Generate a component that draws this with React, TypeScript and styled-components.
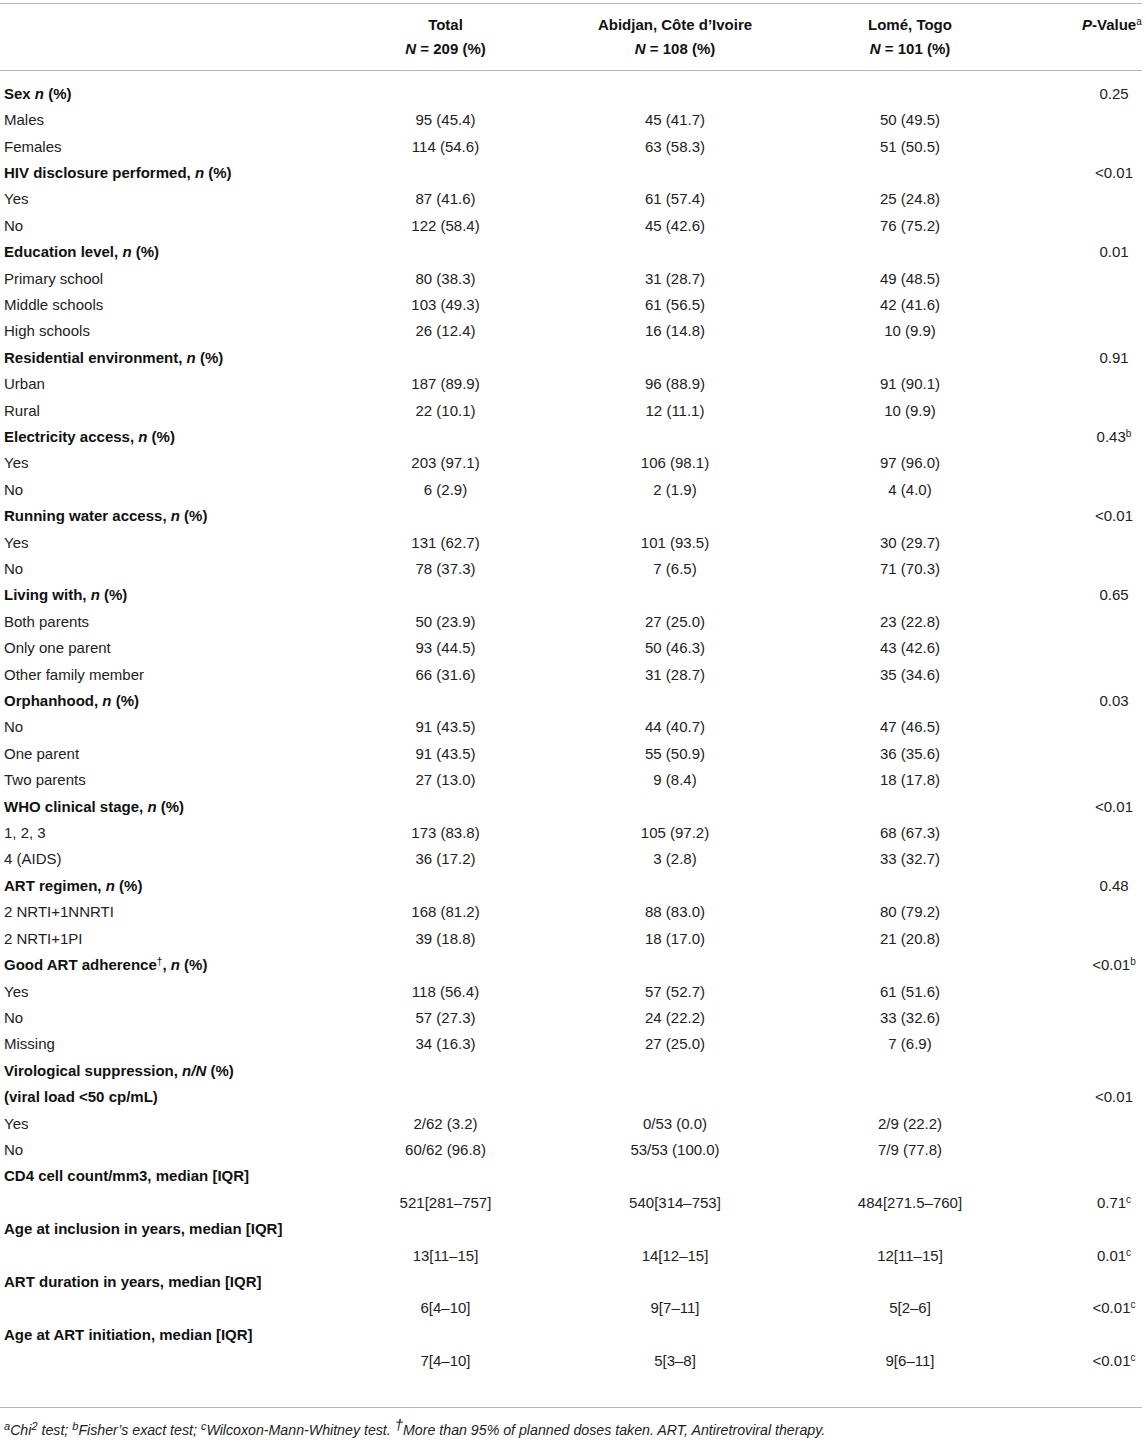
import React from "react";
import styled, { createGlobalStyle } from "styled-components";

const GlobalStyle = createGlobalStyle`
  html, body {
    margin: 0;
    padding: 0;
    background: #ffffff;
  }
  body {
    font-family: "Liberation Sans", Arial, Helvetica, sans-serif;
    color: #222222;
  }
`;

const COLS = "331px 229px 230px 240px 112px";

const Page = styled.div`
  width: 1146px;
  padding-top: 3px;
`;

const Table = styled.div`
  width: 1142px;
  border-top: 1.5px solid #b4b4b4;
  border-bottom: 1.5px solid #b4b4b4;
`;

const HeadBlock = styled.div`
  border-bottom: 1.5px solid #b4b4b4;
  padding: 8px 0 10px;
`;

const HeadRow = styled.div`
  display: grid;
  grid-template-columns: ${COLS};
  height: 24px;
  align-items: center;
  font-size: 15px;
  font-weight: 700;
  color: #111;
`;

const Body = styled.div`
  padding: 9px 0 33px;
`;

const Row = styled.div`
  display: grid;
  grid-template-columns: ${COLS};
  height: 26.42px;
  align-items: center;
  font-size: 15px;
  line-height: 1;
`;

const Label = styled.div<{ $bold?: boolean }>`
  padding-left: 4px;
  white-space: nowrap;
  font-weight: ${(p) => (p.$bold ? 700 : 400)};
  color: ${(p) => (p.$bold ? "#111" : "#222")};
`;

const Cell = styled.div`
  text-align: center;
  white-space: nowrap;
`;

const PCell = styled.div<{ $shift?: number }>`
  padding-left: ${(p) => 56 - (p.$shift ?? 0)}px;
  padding-right: ${(p) => p.$shift ?? 0}px;
  text-align: center;
  white-space: nowrap;
`;

const Sup = styled.sup<{ $size?: number }>`
  font-size: ${(p) => p.$size ?? 10}px;
  line-height: 0;
  vertical-align: 5px;
  font-weight: 400;
`;

const Footer = styled.div`
  padding: 14px 0 0 4px;
  font-size: 14.2px;
  font-style: italic;
  color: #222;
`;

type R = {
  kind: "head" | "item" | "vals";
  label?: React.ReactNode;
  v?: [string, string, string];
  p?: React.ReactNode;
};

const I = ({ children }: { children: React.ReactNode }) => <i>{children}</i>;
const np = (t: string) => (
  <>
    {t}, <I>n</I> (%)
  </>
);
const pv = (v: string, s?: string) => (
  <>
    {v}
    {s && <Sup>{s}</Sup>}
  </>
);

const rows: R[] = [
  { kind: "head", label: <>Sex <I>n</I> (%)</>, p: pv("0.25") },
  { kind: "item", label: "Males", v: ["95 (45.4)", "45 (41.7)", "50 (49.5)"] },
  { kind: "item", label: "Females", v: ["114 (54.6)", "63 (58.3)", "51 (50.5)"] },
  { kind: "head", label: np("HIV disclosure performed"), p: pv("<0.01") },
  { kind: "item", label: "Yes", v: ["87 (41.6)", "61 (57.4)", "25 (24.8)"] },
  { kind: "item", label: "No", v: ["122 (58.4)", "45 (42.6)", "76 (75.2)"] },
  { kind: "head", label: np("Education level"), p: pv("0.01") },
  { kind: "item", label: "Primary school", v: ["80 (38.3)", "31 (28.7)", "49 (48.5)"] },
  { kind: "item", label: "Middle schools", v: ["103 (49.3)", "61 (56.5)", "42 (41.6)"] },
  { kind: "item", label: "High schools", v: ["26 (12.4)", "16 (14.8)", "10 (9.9)"] },
  { kind: "head", label: np("Residential environment"), p: pv("0.91") },
  { kind: "item", label: "Urban", v: ["187 (89.9)", "96 (88.9)", "91 (90.1)"] },
  { kind: "item", label: "Rural", v: ["22 (10.1)", "12 (11.1)", "10 (9.9)"] },
  { kind: "head", label: np("Electricity access"), p: pv("0.43", "b") },
  { kind: "item", label: "Yes", v: ["203 (97.1)", "106 (98.1)", "97 (96.0)"] },
  { kind: "item", label: "No", v: ["6 (2.9)", "2 (1.9)", "4 (4.0)"] },
  { kind: "head", label: np("Running water access"), p: pv("<0.01") },
  { kind: "item", label: "Yes", v: ["131 (62.7)", "101 (93.5)", "30 (29.7)"] },
  { kind: "item", label: "No", v: ["78 (37.3)", "7 (6.5)", "71 (70.3)"] },
  { kind: "head", label: np("Living with"), p: pv("0.65") },
  { kind: "item", label: "Both parents", v: ["50 (23.9)", "27 (25.0)", "23 (22.8)"] },
  { kind: "item", label: "Only one parent", v: ["93 (44.5)", "50 (46.3)", "43 (42.6)"] },
  { kind: "item", label: "Other family member", v: ["66 (31.6)", "31 (28.7)", "35 (34.6)"] },
  { kind: "head", label: np("Orphanhood"), p: pv("0.03") },
  { kind: "item", label: "No", v: ["91 (43.5)", "44 (40.7)", "47 (46.5)"] },
  { kind: "item", label: "One parent", v: ["91 (43.5)", "55 (50.9)", "36 (35.6)"] },
  { kind: "item", label: "Two parents", v: ["27 (13.0)", "9 (8.4)", "18 (17.8)"] },
  { kind: "head", label: np("WHO clinical stage"), p: pv("<0.01") },
  { kind: "item", label: "1, 2, 3", v: ["173 (83.8)", "105 (97.2)", "68 (67.3)"] },
  { kind: "item", label: "4 (AIDS)", v: ["36 (17.2)", "3 (2.8)", "33 (32.7)"] },
  { kind: "head", label: np("ART regimen"), p: pv("0.48") },
  { kind: "item", label: "2 NRTI+1NNRTI", v: ["168 (81.2)", "88 (83.0)", "80 (79.2)"] },
  { kind: "item", label: "2 NRTI+1PI", v: ["39 (18.8)", "18 (17.0)", "21 (20.8)"] },
  {
    kind: "head",
    label: (
      <>
        Good ART adherence<Sup>†</Sup>, <I>n</I> (%)
      </>
    ),
    p: pv("<0.01", "b"),
  },
  { kind: "item", label: "Yes", v: ["118 (56.4)", "57 (52.7)", "61 (51.6)"] },
  { kind: "item", label: "No", v: ["57 (27.3)", "24 (22.2)", "33 (32.6)"] },
  { kind: "item", label: "Missing", v: ["34 (16.3)", "27 (25.0)", "7 (6.9)"] },
  {
    kind: "head",
    label: (
      <>
        Virological suppression, <I>n/N</I> (%)
      </>
    ),
  },
  { kind: "head", label: "(viral load <50 cp/mL)", p: pv("<0.01") },
  { kind: "item", label: "Yes", v: ["2/62 (3.2)", "0/53 (0.0)", "2/9 (22.2)"] },
  { kind: "item", label: "No", v: ["60/62 (96.8)", "53/53 (100.0)", "7/9 (77.8)"] },
  { kind: "head", label: "CD4 cell count/mm3, median [IQR]" },
  { kind: "vals", v: ["521[281–757]", "540[314–753]", "484[271.5–760]"], p: pv("0.71", "c") },
  { kind: "head", label: "Age at inclusion in years, median [IQR]" },
  { kind: "vals", v: ["13[11–15]", "14[12–15]", "12[11–15]"], p: pv("0.01", "c") },
  { kind: "head", label: "ART duration in years, median [IQR]" },
  { kind: "vals", v: ["6[4–10]", "9[7–11]", "5[2–6]"], p: pv("<0.01", "c") },
  { kind: "head", label: "Age at ART initiation, median [IQR]" },
  { kind: "vals", v: ["7[4–10]", "5[3–8]", "9[6–11]"], p: pv("<0.01", "c") },
];

const App = () => {
  return (
    <>
      <GlobalStyle />
      <Page>
        <Table>
          <HeadBlock>
            <HeadRow>
              <div />
              <Cell>Total</Cell>
              <Cell>Abidjan, Côte d’Ivoire</Cell>
              <Cell>Lomé, Togo</Cell>
              <PCell $shift={4}>
                <I>P</I>-Value<Sup>a</Sup>
              </PCell>
            </HeadRow>
            <HeadRow>
              <div />
              <Cell>
                <I>N</I> = 209 (%)
              </Cell>
              <Cell>
                <I>N</I> = 108 (%)
              </Cell>
              <Cell>
                <I>N</I> = 101 (%)
              </Cell>
              <div />
            </HeadRow>
          </HeadBlock>
          <Body>
            {rows.map((r, i) => (
              <Row key={i}>
                <Label $bold={r.kind === "head"}>{r.label}</Label>
                <Cell>{r.v ? r.v[0] : ""}</Cell>
                <Cell>{r.v ? r.v[1] : ""}</Cell>
                <Cell>{r.v ? r.v[2] : ""}</Cell>
                <PCell>{r.p}</PCell>
              </Row>
            ))}
          </Body>
        </Table>
        <Footer>
          <Sup $size={11}>a</Sup>Chi<Sup $size={11}>2</Sup> test; <Sup $size={11}>b</Sup>Fisher’s exact test;{" "}
          <Sup $size={11}>c</Sup>Wilcoxon-Mann-Whitney test. <Sup $size={15}>†</Sup>More than 95% of planned
          doses taken. ART, Antiretroviral therapy.
        </Footer>
      </Page>
    </>
  );
};

export default App;
